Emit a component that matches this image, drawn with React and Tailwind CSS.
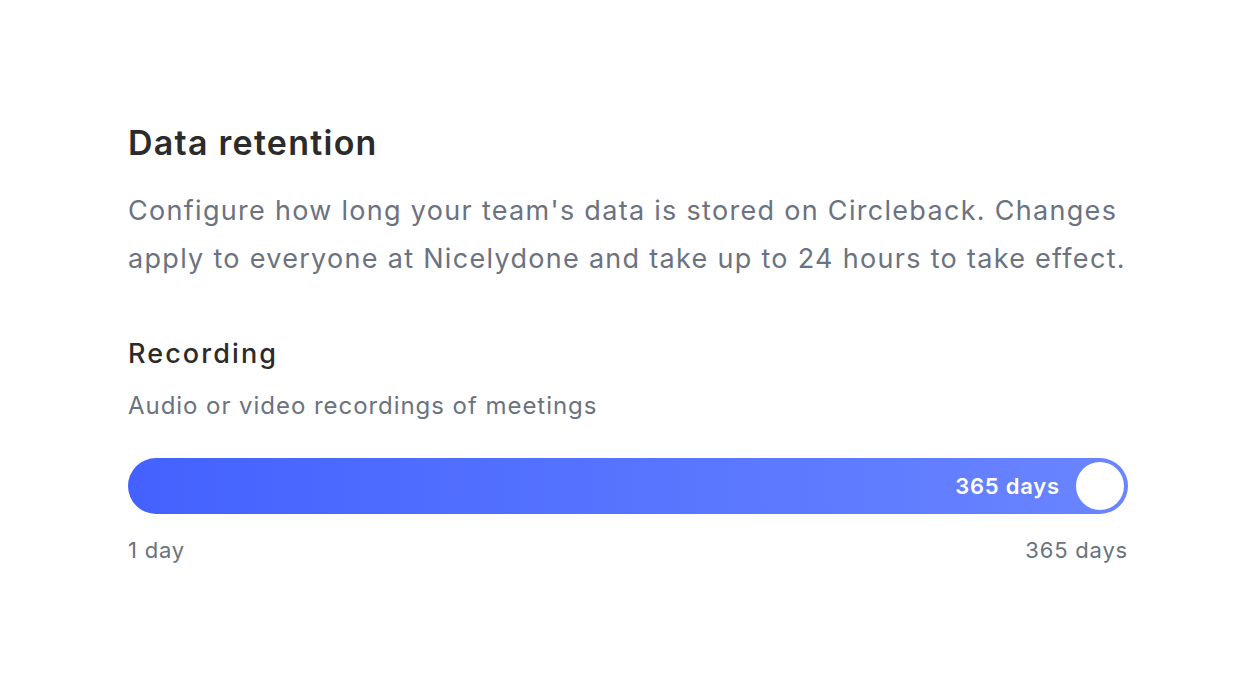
export default function App() {
  return (
    <div className="min-h-screen bg-white px-[128px] pt-[123px]" style={{ fontFamily: "Inter, 'Noto Sans', sans-serif" }}>
      <div className="w-[1000px]">
        <h1 className="text-[34px] leading-[40px] font-semibold text-[#2b2b2b] tracking-[1.25px]">Data retention</h1>
        <p className="mt-[24px] text-[27px] leading-[48px] text-[#6b7280] tracking-[1.3px]">
          Configure how long your team's data is stored on Circleback. Changes apply to everyone at Nicelydone and take up to 24 hours to take effect.
        </p>

        <h2 className="mt-[55px] text-[27px] leading-[32px] font-medium text-[#2b2b2b] tracking-[2.1px]">Recording</h2>
        <p className="mt-[22px] text-[24px] leading-[28px] text-[#6b7280] tracking-[0.95px]">Audio or video recordings of meetings</p>

        <div className="mt-[38px] h-[56px] rounded-full bg-gradient-to-r from-[#4461ff] to-[#6a85ff] flex items-center justify-end pr-[4px]">
          <span className="text-white text-[22px] font-semibold tracking-[0.8px] mr-[16px]">365 days</span>
          <div className="w-[48px] h-[48px] rounded-full bg-white"></div>
        </div>

        <div className="mt-[22px] flex justify-between text-[22px] leading-[28px] text-[#6b7280] tracking-[0.8px]">
          <span>1 day</span>
          <span>365 days</span>
        </div>
      </div>
    </div>
  );
}
